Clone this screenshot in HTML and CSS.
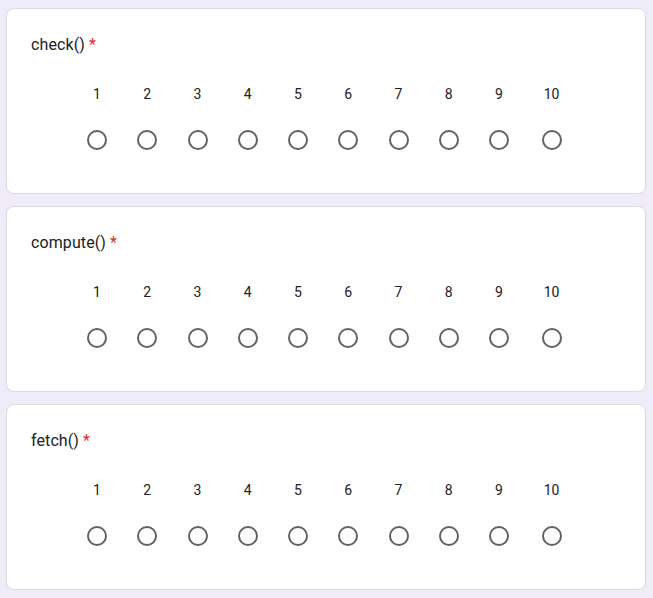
FILE: index.html
```html
<!DOCTYPE html>
<html lang="en">
<head>
<meta charset="utf-8">
<title>Scale questions</title>
<link rel="stylesheet" href="styles.css">
</head>
<body>
<main class="form">
  <section class="card">
    <div class="title">check() <span class="req">*</span></div>
    <div class="scale">
      <label class="opt"><span class="num">1</span><span class="radio"></span></label>
      <label class="opt"><span class="num">2</span><span class="radio"></span></label>
      <label class="opt"><span class="num">3</span><span class="radio"></span></label>
      <label class="opt"><span class="num">4</span><span class="radio"></span></label>
      <label class="opt"><span class="num">5</span><span class="radio"></span></label>
      <label class="opt"><span class="num">6</span><span class="radio"></span></label>
      <label class="opt"><span class="num">7</span><span class="radio"></span></label>
      <label class="opt"><span class="num">8</span><span class="radio"></span></label>
      <label class="opt"><span class="num">9</span><span class="radio"></span></label>
      <label class="opt opt-wide"><span class="num">10</span><span class="radio"></span></label>
    </div>
  </section>
  <section class="card">
    <div class="title">compute() <span class="req">*</span></div>
    <div class="scale">
      <label class="opt"><span class="num">1</span><span class="radio"></span></label>
      <label class="opt"><span class="num">2</span><span class="radio"></span></label>
      <label class="opt"><span class="num">3</span><span class="radio"></span></label>
      <label class="opt"><span class="num">4</span><span class="radio"></span></label>
      <label class="opt"><span class="num">5</span><span class="radio"></span></label>
      <label class="opt"><span class="num">6</span><span class="radio"></span></label>
      <label class="opt"><span class="num">7</span><span class="radio"></span></label>
      <label class="opt"><span class="num">8</span><span class="radio"></span></label>
      <label class="opt"><span class="num">9</span><span class="radio"></span></label>
      <label class="opt opt-wide"><span class="num">10</span><span class="radio"></span></label>
    </div>
  </section>
  <section class="card">
    <div class="title">fetch() <span class="req">*</span></div>
    <div class="scale">
      <label class="opt"><span class="num">1</span><span class="radio"></span></label>
      <label class="opt"><span class="num">2</span><span class="radio"></span></label>
      <label class="opt"><span class="num">3</span><span class="radio"></span></label>
      <label class="opt"><span class="num">4</span><span class="radio"></span></label>
      <label class="opt"><span class="num">5</span><span class="radio"></span></label>
      <label class="opt"><span class="num">6</span><span class="radio"></span></label>
      <label class="opt"><span class="num">7</span><span class="radio"></span></label>
      <label class="opt"><span class="num">8</span><span class="radio"></span></label>
      <label class="opt"><span class="num">9</span><span class="radio"></span></label>
      <label class="opt opt-wide"><span class="num">10</span><span class="radio"></span></label>
    </div>
  </section>
</main>
</body>
</html>
```
FILE: styles.css
```css
html, body {
  margin: 0;
  padding: 0;
  background: #f0ebf8;
}
body {
  font-family: Roboto, "Liberation Sans", Arial, sans-serif;
  color: #202124;
  overflow: hidden;
}
.form {
  display: flex;
  flex-direction: column;
  gap: 12px;
  padding: 8px 7px 0 6px;
}
.card {
  background: #fff;
  border: 1px solid #dadce0;
  border-radius: 8px;
  padding: 24px 24px 43px;
}
.title {
  font-size: 16px;
  line-height: 24px;
  letter-spacing: 0.1px;
}
.req {
  color: #d93025;
}
.scale {
  display: flex;
  justify-content: center;
  margin-top: 27px;
  margin-right: 1px;
}
.opt {
  flex: none;
  width: 50.25px;
  display: flex;
  flex-direction: column;
  align-items: center;
}
.opt-wide {
  width: 55px;
}
.num {
  font-size: 14px;
  line-height: 20px;
  height: 20px;
}
.radio {
  box-sizing: border-box;
  width: 20px;
  height: 20px;
  margin-top: 26px;
  border: 2px solid #5f6368;
  border-radius: 50%;
}
```
